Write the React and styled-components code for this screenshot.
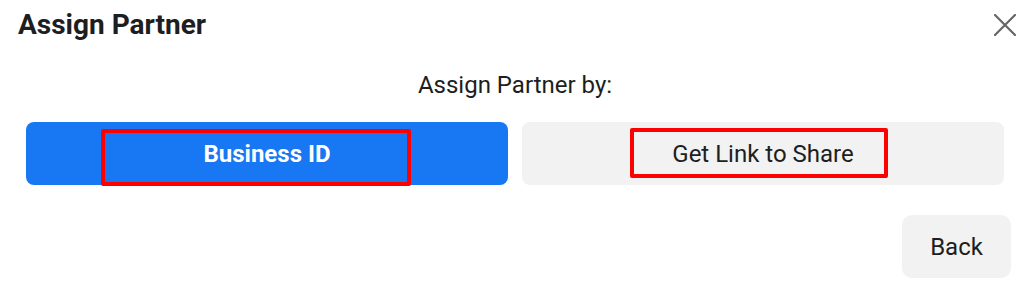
import styled, { createGlobalStyle } from 'styled-components'

const GlobalStyle = createGlobalStyle`
    body{
        margin: 0;
        background: #ffffff;
        font-family: Roboto, "Liberation Sans", sans-serif;
        color: #1c1e21;
    }
`

const Dialog = styled.div`
    width: 1024px;
    height: 294px;
    box-sizing: border-box;
    padding: 8px 8px 0 18px;
`

const Header = styled.div`
    display: flex;
    justify-content: space-between;
    align-items: flex-start;
`

const Title = styled.h1`
    margin: 0;
    font-size: 28px;
    font-weight: 700;
    line-height: 34px;
    color: #1c1e21;
`

const CloseButton = styled.button`
    border: none;
    background: none;
    padding: 0;
    margin-top: 6px;
    width: 22px;
    height: 22px;
    display: flex;
    cursor: pointer;
`

const Body = styled.div`
    padding: 28px 12px 0 8px;
    display: flex;
    flex-direction: column;
`

const Prompt = styled.p`
    margin: 0 0 22px;
    text-align: center;
    font-size: 24px;
    line-height: 30px;
`

const Choices = styled.div`
    display: grid;
    grid-template-columns: 1fr 1fr;
    gap: 14px;
`

const Choice = styled.button`
    position: relative;
    height: 63px;
    border: none;
    border-radius: 8px;
    font-family: inherit;
    font-size: 24px;
    font-weight: ${p => (p.$active ? 700 : 400)};
    background: ${p => (p.$active ? '#1877f2' : '#f2f2f2')};
    color: ${p => (p.$active ? '#ffffff' : '#1c1e21')};
    cursor: pointer;
`

const Highlight = styled.span`
    position: absolute;
    left: ${p => p.$left}px;
    top: ${p => p.$top}px;
    width: ${p => p.$width}px;
    height: ${p => p.$height}px;
    box-sizing: border-box;
    border: 4px solid #ff0000;
    border-radius: 2px;
    pointer-events: none;
`

const Footer = styled.div`
    display: flex;
    justify-content: flex-end;
    padding-top: 30px;
    margin-right: -7px;
`

const BackButton = styled.button`
    width: 109px;
    height: 63px;
    border: none;
    border-radius: 10px;
    background: #f2f2f2;
    color: #1c1e21;
    font-family: inherit;
    font-size: 24px;
    cursor: pointer;
`

export default function App() {
    return (
        <>
            <GlobalStyle />
            <Dialog>
                <Header>
                    <Title>Assign Partner</Title>
                    <CloseButton aria-label="Close">
                        <svg width="22" height="22" viewBox="0 0 22 22">
                            <path d="M1 1L21 21M21 1L1 21" stroke="#666" strokeWidth="2.2" strokeLinecap="round" />
                        </svg>
                    </CloseButton>
                </Header>
                <Body>
                    <Prompt>Assign Partner by:</Prompt>
                    <Choices>
                        <Choice $active>
                            Business ID
                            <Highlight $left={75} $top={7} $width={310} $height={57} />
                        </Choice>
                        <Choice>
                            Get Link to Share
                            <Highlight $left={108} $top={6} $width={258} $height={50} />
                        </Choice>
                    </Choices>
                    <Footer>
                        <BackButton>Back</BackButton>
                    </Footer>
                </Body>
            </Dialog>
        </>
    )
}
